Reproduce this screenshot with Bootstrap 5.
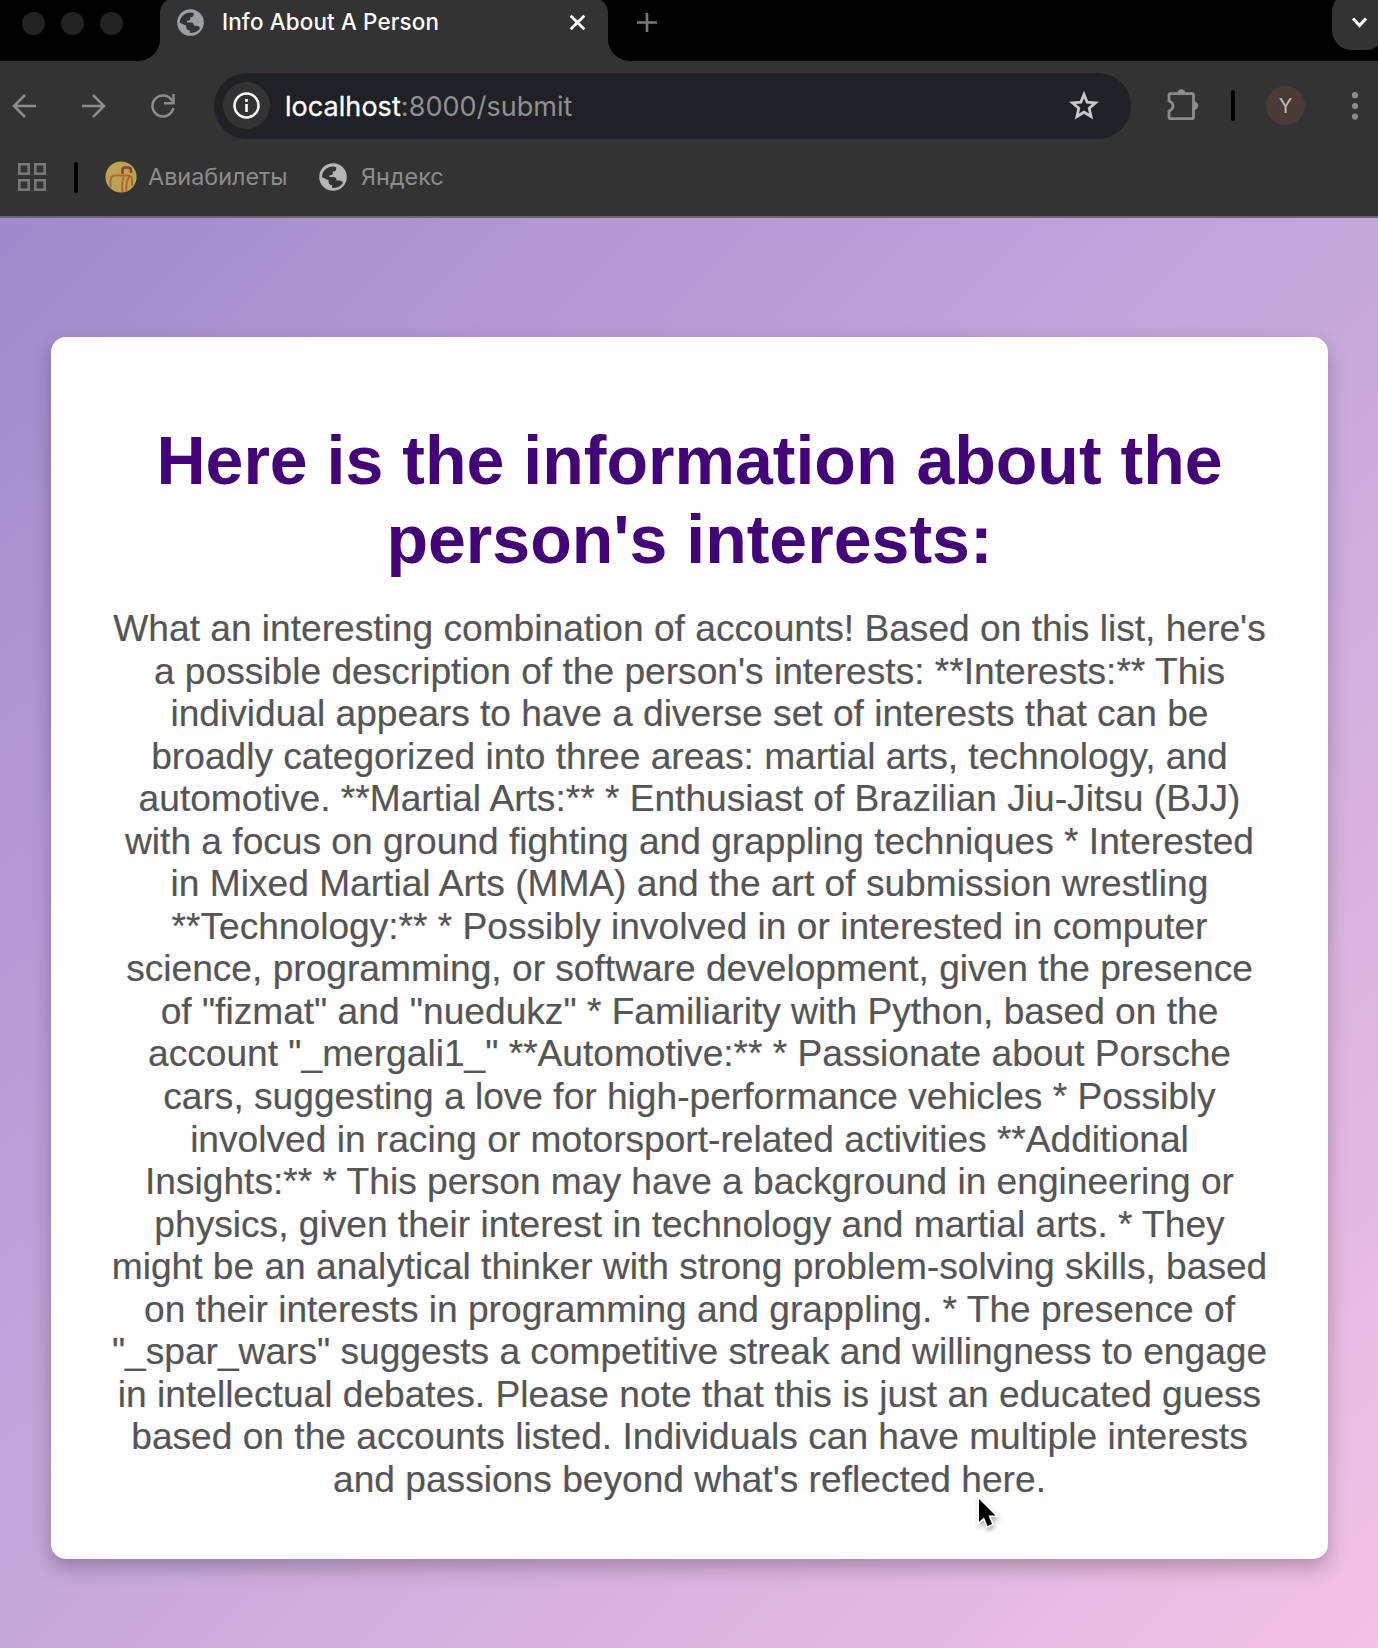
<!DOCTYPE html>
<html lang="en">
<head>
<meta charset="utf-8">
<meta name="viewport" content="width=device-width, initial-scale=1">
<title>Info About A Person</title>
<link href="https://cdn.jsdelivr.net/npm/bootstrap@5.3.0/dist/css/bootstrap.min.css" rel="stylesheet">
<style>
body{height:1648px;overflow:hidden;font-family:Inter,sans-serif;background:#333}
svg{display:block;flex:none}
.strip{height:61px;background:#000;padding-left:22px}
.strip .dots{gap:16px;padding-top:12px;width:138px}
.dots i{width:23px;height:23px;border-radius:50%;background:#222}
.tab{width:448px;height:61px;background:#333;padding-left:17px}
.tab::before,.tab::after{content:"";position:absolute;bottom:0;width:22px;height:22px}
.tab::before{left:-22px;background:radial-gradient(circle at 0 0,#000 21.5px,#333 22.5px)}
.tab::after{right:-22px;background:radial-gradient(circle at 100% 0,#000 21.5px,#333 22.5px)}
.tab .shoulder{top:0;width:8px;height:13px}
.tab-title{font-size:22.4px;font-weight:500;color:#fff;line-height:44px;margin-left:18px;width:222px;letter-spacing:.15px}
.chev{width:54px;height:58px;margin:-8px -8px 0 auto;background:#333;border-radius:20px}
.tools{height:89px;color:#8c8c8c}
.omni{width:917px;height:66px;border-radius:33px;background:#202124;padding:0 31px 0 9px}
.info{width:47px;height:47px;background:#333}
.url{font-size:27px;line-height:40px;color:#8f8f8f;margin-left:15px;padding-top:2px;letter-spacing:.05px}
.url span{color:#fff;-webkit-text-stroke:.3px #fff}
.bar{width:4px;height:31px;border-radius:2px;background:#000}
.avatar{width:39px;height:39px;background:#4a3b36;color:#c3b9b5;font-size:20px}
.marks{height:66px;padding:0 0 12px 18px;color:#8c8c8c;font-size:23.4px}
.page{height:1432px;border-top:2px solid #6b6669;background:linear-gradient(135deg,#9f8bcb,#b69ad5 25%,#c5a8da 50%,#f3c2e5);padding:119px 50px 0 51px}
.result{height:1222px;border-radius:15px;background:#fefefe;box-shadow:0 9px 20px rgba(0,0,0,.25);font-family:"Liberation Sans",Arial,sans-serif;padding-top:84px;white-space:nowrap}
.result h1{font-size:68.05px;line-height:78.7px;font-weight:700;color:#430478;margin:0 0 28.600px}
.result p{font-size:37.14px;line-height:42.55px;color:#555;margin:0;-webkit-text-stroke:.2px #555}
.cursor{left:973px;top:1493px}
</style>
<script src="https://cdn.jsdelivr.net/npm/bootstrap@5.3.0/dist/js/bootstrap.bundle.min.js"></script>
</head>
<body class="position-relative">
<svg class="d-none"><defs>
<symbol id="globe" viewBox="0 0 28 28"><circle cx="14" cy="14" r="13.8" fill="currentColor"/><path d="M3 14.300C3 8 8 3.500 14.200 3.500L17.200 4.200V6C17.200 8 15.500 8.600 13.800 8.600V10.200C13.800 11.800 12.300 12.300 10.400 12.300V14H14.500C16.600 14 17.600 15.600 17.600 17.400H20.300C22.200 17.400 23.400 18.500 24 19.700C22 23 18.500 25 13.200 25V22.300C11 22.300 9.600 20.900 9.600 18.700V17.300Z" fill="#333"/></symbol>
</defs></svg>
<header>
<div class="strip d-flex overflow-hidden">
<div class="dots d-flex"><i></i><i></i><i></i></div>
<div class="tab d-flex position-relative align-items-start">
<svg class="shoulder position-absolute start-0" viewBox="0 0 8 13"><path d="M0 0H7Q0 5 0 13Z" fill="#000"/></svg>
<svg class="shoulder position-absolute end-0" viewBox="0 0 8 13"><path d="M8 0H1Q8 5 8 13Z" fill="#000"/></svg>
<svg width="27" height="27" style="color:#9aa0a6;margin-top:9px"><use href="#globe"/></svg>
<div class="tab-title">Info About A Person</div>
<svg class="ms-auto" style="margin:14px 22px 0" width="17" height="17" viewBox="0 0 17 17"><path d="M1.700 1.700 15.300 15.300M15.300 1.700 1.700 15.300" stroke="#fff" stroke-width="2.800"/></svg>
</div>
<svg style="margin:12px 0 0 29px" width="20" height="21" viewBox="0 0 20 21"><path d="M0 10.500H20M10 1V20" stroke="#777" stroke-width="2.600"/></svg>
<div class="chev ps-1"><svg class="ms-3" style="margin-top:25px" width="15" height="12" viewBox="0 0 15 12"><path d="M1 1.500 7.500 8.500 14 1.500" fill="none" stroke="#fff" stroke-width="3"/></svg></div>
</div>
<div class="tools d-flex align-items-center">
<svg width="24" height="24" viewBox="0 0 24 24" style="margin-left:12px" fill="none" stroke="currentColor" stroke-width="2.500"><path d="M24 12H2M13 1 2 12 13 23"/></svg>
<svg width="24" height="24" viewBox="0 0 24 24" style="margin-left:46px" fill="none" stroke="currentColor" stroke-width="2.500"><path d="M0 12H22M11 1 22 12 11 23"/></svg>
<svg width="24" height="24" viewBox="0 0 24 24" style="margin-left:45px" fill="none" stroke="currentColor" stroke-width="2.500"><path d="M22.300 14A10.500 10.500 0 1 1 20.500 5.700L22 8M22.500 0V9.200H13"/></svg>
<div class="omni d-flex align-items-center" style="margin-left:39px">
<div class="info rounded-circle d-flex align-items-center justify-content-center"><svg width="27" height="27" viewBox="0 0 27 27" fill="none" stroke="#fff"><circle cx="13.500" cy="13.500" r="12" stroke-width="2.500"/><path d="M13.500 12V20M13.500 7V10" stroke-width="2.600"/></svg></div>
<div class="url"><span>localhost</span>:8000/submit</div>
<svg class="ms-auto" width="32" height="32" viewBox="0 0 32 32" fill="none" stroke="#c7c7c7" stroke-width="2.800"><path d="M16 4.500 19.100 12.100 27.500 12.800 21.200 18.300 23.100 26.500 16 22.200 8.900 26.500 10.800 18.300 4.500 12.800 12.900 12.100Z"/></svg>
</div>
<svg width="34" height="34" viewBox="0 0 34 34" style="margin-left:34px;margin-top:-4px" fill="none" stroke="currentColor" stroke-width="2.800"><path d="M5.500 6.700H27Q28.500 6.700 28.500 8.200V30Q28.500 31.700 27 31.700H5.500Q4 31.700 4 30V24Q8 22.500 8 19T4 14V8.200Q4 6.700 5.500 6.700Z"/><path d="M12.600 6A3.800 3.800 0 0 1 20.200 6ZM29 14.500A4.200 4.200 0 0 1 29 22.900Z" fill="currentColor" stroke="none"/></svg>
<div class="bar" style="margin-left:32px"></div>
<div class="avatar rounded-circle d-flex align-items-center justify-content-center" style="margin-left:31px">Y</div>
<svg width="8" height="28" viewBox="0 0 8 28" style="margin-left:46px" fill="currentColor"><circle cx="4" cy="3.200" r="3.100"/><circle cx="4" cy="14" r="3.100"/><circle cx="4" cy="24.600" r="3.100"/></svg>
</div>
<div class="marks d-flex align-items-center">
<svg width="28" height="28" viewBox="0 0 28 28" fill="none" stroke="#777" stroke-width="2.600"><path d="M1.300 1.300H10.700V10.700H1.300ZM17.300 1.300H26.700V10.700H17.300ZM1.300 17.300H10.700V26.700H1.300ZM17.300 17.300H26.700V26.700H17.300Z"/></svg>
<div class="bar" style="margin-left:28px"></div>
<svg width="32" height="32" viewBox="0 0 32 32" style="margin-left:27px" fill="none"><circle cx="16" cy="16" r="15.600" fill="#b9a453"/><path d="M5.500 27V19Q5.500 14.500 10 14.500H22Q27 14.500 27 19V25M18.500 16Q16.500 22 17.500 31M24 16Q20.500 22 21.500 31" stroke="#b86536" stroke-width="2"/><path d="M17.500 13V9Q17.500 6.500 20 6.500H23Q25.700 6.500 26 9.500V12" stroke="#943c3b" stroke-width="2.500"/></svg>
<span style="margin-left:11px;width:137px">Авиабилеты</span>
<svg width="28" height="28" style="color:#b5b5b5;margin-left:34px"><use href="#globe"/></svg>
<span style="margin-left:14px">Яндекс</span>
</div>
</header>
<main class="page">
<section class="result text-center">
<h1>Here is the information about the<br>person's interests:</h1>
<p>What an interesting combination of accounts! Based on this list, here's<br>a possible description of the person's interests: **Interests:** This<br>individual appears to have a diverse set of interests that can be<br>broadly categorized into three areas: martial arts, technology, and<br>automotive. **Martial Arts:** * Enthusiast of Brazilian Jiu-Jitsu (BJJ)<br>with a focus on ground fighting and grappling techniques * Interested<br>in Mixed Martial Arts (MMA) and the art of submission wrestling<br>**Technology:** * Possibly involved in or interested in computer<br>science, programming, or software development, given the presence<br>of "fizmat" and "nuedukz" * Familiarity with Python, based on the<br>account "_mergali1_" **Automotive:** * Passionate about Porsche<br>cars, suggesting a love for high-performance vehicles * Possibly<br>involved in racing or motorsport-related activities **Additional<br>Insights:** * This person may have a background in engineering or<br>physics, given their interest in technology and martial arts. * They<br>might be an analytical thinker with strong problem-solving skills, based<br>on their interests in programming and grappling. * The presence of<br>"_spar_wars" suggests a competitive streak and willingness to engage<br>in intellectual debates. Please note that this is just an educated guess<br>based on the accounts listed. Individuals can have multiple interests<br>and passions beyond what's reflected here.</p>
</section>
</main>
<svg class="cursor position-absolute" width="30" height="40" viewBox="0 0 30 40" style="filter:drop-shadow(1px 3px 2px rgba(0,0,0,.3))"><path d="M6 6V29L11 24.500 14.500 33 19 31 15.500 22.500H22.500Z" fill="#000" stroke="#fff" stroke-width="3" paint-order="stroke"/></svg>
</body>
</html>
